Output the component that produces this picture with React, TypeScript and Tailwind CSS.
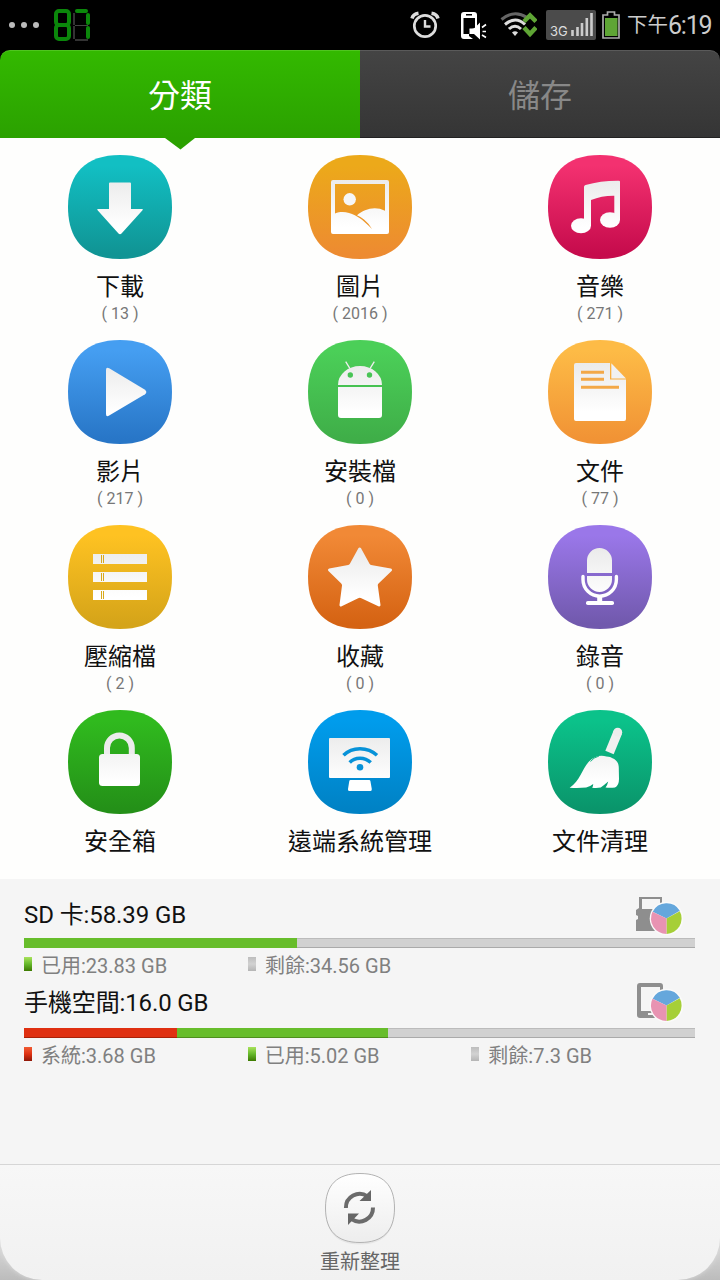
import type { ReactNode } from "react";

const WHITE = "url(#glyph)";

type Category = {
  name: string;
  count?: number;
  from: string;
  to: string;
  glyph: ReactNode;
};

const categories: Category[] = [
  {
    name: "下載",
    count: 13,
    from: "#12bfc3",
    to: "#109494",
    glyph: (
      <path
        d="M42 27.5h20q1 0 1 1V54h11q1.600 0 .5 1.300L53.500 78.500q-1.500 1.500-3 0L29.600 55.300Q28.500 54 30 54h11V28.500q0-1 1-1z"
        fill={WHITE}
      />
    ),
  },
  {
    name: "圖片",
    count: 2016,
    from: "#eca91a",
    to: "#ed8b31",
    glyph: (
      <>
        <path
          fillRule="evenodd"
          d="M25 25h54q2 0 2 2v50q0 2-2 2H25q-2 0-2-2V27q0-2 2-2zM27 29v29.500C39 54 50 61.500 56 66.500q5 4.500 8 7.500-2.500-5-8-9.500-3.500-2.700-7-4.200C56 54 67 50.500 77 55.700V29z"
          fill={WHITE}
        />
        <circle cx="41.700" cy="44.300" r="6.200" fill="#f6f6f6" />
      </>
    ),
  },
  {
    name: "音樂",
    count: 271,
    from: "#f33170",
    to: "#c60b4c",
    glyph: (
      <g fill={WHITE}>
        <path d="M36 32q0-1.500 1.500-2Q53 25.500 71 25.700q1 0 1 1V65h-5.700V40.700Q54 40.500 43 45v26H36z" />
        <ellipse cx="33" cy="70.700" rx="10" ry="7.500" />
        <ellipse cx="62" cy="65" rx="10" ry="7.700" />
      </g>
    ),
  },
  {
    name: "影片",
    count: 217,
    from: "#459ef1",
    to: "#2876c7",
    glyph: (
      <path
        d="M38 30q0-3.500 3.200-1.700L77 49.700q2.600 2.300 0 4.600L41.200 75.600Q38 77.300 38 74z"
        fill={WHITE}
      />
    ),
  },
  {
    name: "安裝檔",
    count: 0,
    from: "#4bcf58",
    to: "#3fae48",
    glyph: (
      <>
        <path d="M37.700 21.700l4.300 7M66.300 21.700l-4.300 7" stroke="#eee" strokeWidth="1.300" />
        <path d="M30 45q0-8 6.500-13.500T52 26t15.500 5.500T74 45zM30 47h44v28q0 3-3 3H33q-3 0-3-3z" fill={WHITE} />
        <circle cx="42.300" cy="35" r="2.700" fill="#48c455" />
        <circle cx="61.500" cy="35" r="2.700" fill="#48c455" />
      </>
    ),
  },
  {
    name: "文件",
    count: 77,
    from: "#fdbb46",
    to: "#f19335",
    glyph: (
      <>
        <path d="M28 23h34v16.500h16V79q0 2-2 2H28q-2 0-2-2V25q0-2 2-2z" fill={WHITE} />
        <path d="M63.300 23.300L78 38.500H63.300z" fill="#f1f1f1" />
        <path d="M33 32.300h23M33 39.300h23M33 47.300h38" stroke="#f3a847" strokeWidth="3" />
      </>
    ),
  },
  {
    name: "壓縮檔",
    count: 2,
    from: "#fec222",
    to: "#d5a419",
    glyph: (
      <>
        <path d="M25 29h54v10H25zM25 47h54v10H25zM25 65h54v10H25z" fill={WHITE} />
        <path
          d="M33.500 30v8M35.500 30v8M33.500 48v8M35.500 48v8M33.500 66v8M35.500 66v8"
          stroke="#d9a91c"
          strokeWidth="1"
        />
      </>
    ),
  },
  {
    name: "收藏",
    count: 0,
    from: "#f18936",
    to: "#d56313",
    glyph: (
      <path
        d="M51.700 24l8.500 15.500q.8 1.600 2.600 1.900L82.500 45 69.500 57.500q-1.500 1.500-1.200 3.300L71 80 54 71.800q-2.200-1-4.500 0L33 80l2.500-19.200q.2-1.800-1.200-3.300L21.500 45l19-3.600q1.900-.3 2.700-1.900z"
        fill={WHITE}
        stroke={WHITE}
        strokeWidth="3"
        strokeLinejoin="round"
      />
    ),
  },
  {
    name: "錄音",
    count: 0,
    from: "#9a77e9",
    to: "#7159ad",
    glyph: (
      <>
        <path
          d="M39 48V35.500a12.500 12.500 0 0 1 25 0V48zM39 51h25v3.500a12.500 12.500 0 0 1-25 0z"
          fill={WHITE}
        />
        <path d="M35 51.500v3a16.700 16.700 0 0 0 33.400 0v-3" fill="none" stroke="#fff" strokeWidth="3.400" strokeLinecap="round" />
        <path d="M51.700 71v6" stroke="#fff" strokeWidth="5" />
        <rect x="38" y="76" width="28" height="4" rx="1.800" fill="#fff" />
      </>
    ),
  },
  {
    name: "安全箱",
    from: "#30ba1e",
    to: "#249018",
    glyph: (
      <>
        <path d="M39 46V38a12.400 12.400 0 0 1 24.800 0v8" fill="none" stroke="#ececec" strokeWidth="6" />
        <rect x="31" y="44" width="41" height="32" rx="3.500" fill={WHITE} />
      </>
    ),
  },
  {
    name: "遠端系統管理",
    from: "#009cec",
    to: "#0082c5",
    glyph: (
      <>
        <path d="M22 28h59q1 0 1 1v38q0 1-1 1H22q-1 0-1-1V29q0-1 1-1z" fill={WHITE} />
        <path d="M42.500 70h18.700q1 0 1.200 1l1.400 8q.2 2-1.300 2H41.300q-1.700 0-1.300-2l1.300-8q.2-1 1.200-1z" fill="#fff" />
        <path d="M35.500 45.300Q42 38.700 52 38.700t17 6.600M41.700 52.500q4-4.300 10.300-4.300t10.700 4.300" fill="none" stroke="#0792d8" strokeWidth="3.500" />
        <circle cx="52" cy="57.200" r="3.300" fill="#0792d8" />
      </>
    ),
  },
  {
    name: "文件清理",
    from: "#0bc28a",
    to: "#0a956b",
    glyph: (
      <>
        <path d="M69.700 22.500L61.500 42.500" stroke="#f0f0f0" strokeWidth="9" />
        <circle cx="69.700" cy="22.300" r="4.500" fill="#ededed" />
        <path
          d="M21.700 77.700C32 71 34 59 41 51.500 46 46 53 44.500 58.500 46.500c3 .5 4.500.5 5.500 1.500 5 2 7 5.500 6.800 11l.2 10q0 6.500-4 8.500-5 .5-9.500 0 2-2.500 2.700-6-4 3.500-7.500 6-4 .8-8.500.2 1-1.700 1-3.700-3 2.500-7 3.500-8 .7-16.500.2z"
          fill={WHITE}
        />
        <path d="M42.500 51.500q3-4 8.500-5.500" stroke="#0bb07e" strokeWidth=".9" fill="none" />
      </>
    ),
  },
];

const squircle = "M52 0C86 0 104 18 104 52S86 104 52 104 0 86 0 52 18 0 52 0z";

function CategoryItem({ item, index }: { item: Category; index: number }) {
  const id = `bg-${index}`;
  return (
    <a href="#" className="flex flex-col items-center">
      <svg width="104" height="104" viewBox="0 0 104 104">
        <defs>
          <linearGradient id={id} x1="0" y1="0" x2="0" y2="1">
            <stop offset=".1" stopColor={item.from} />
            <stop offset=".95" stopColor={item.to} />
          </linearGradient>
          <linearGradient id="glyph" gradientUnits="userSpaceOnUse" x1="0" y1="24" x2="0" y2="72">
            <stop offset="0" stopColor="#ebebeb" />
            <stop offset="1" stopColor="#fff" />
          </linearGradient>
        </defs>
        <path d={squircle} fill={`url(#${id})`} />
        {item.glyph}
      </svg>
      <span className="mt-3 text-2xl leading-8 text-[#111]">{item.name}</span>
      {item.count !== undefined && (
        <span className="mt-px text-base leading-5 text-[#777]">( {item.count} )</span>
      )}
    </a>
  );
}

function StatusBar() {
  return (
    <div className="flex h-[50px] items-center bg-black">
      {/* Notifications */}
      <div className="ml-[9px] flex gap-[6px]">
        <i className="size-[6px] rounded-full bg-[#bbb]" />
        <i className="size-[6px] rounded-full bg-[#bbb]" />
        <i className="size-[6px] rounded-full bg-[#bbb]" />
      </div>
      <div className="ml-[15px] flex gap-[2px]">
        <div className="flex h-8 w-[17px] flex-col">
          <i className="h-[18px] rounded-[5px] border-4 border-[#0b870b]" />
          <i className="-mt-[4px] h-[18px] rounded-[5px] border-4 border-[#0b870b]" />
        </div>
        {/* Dim segments stay faintly visible on the second digit */}
        <div className="flex h-8 w-[17px] flex-col">
          <i className="mx-[2px] h-[4px] rounded-sm bg-[#0b870b]" />
          <div className="flex h-3 justify-between">
            <i className="w-[2px] bg-[#333]" />
            <i className="w-[4px] rounded-sm bg-[#0b870b]" />
          </div>
          <i className="mx-[2px] h-px bg-[#444]" />
          <div className="flex h-[13px] justify-between">
            <i className="w-[2px] bg-[#333]" />
            <i className="w-[4px] rounded-sm bg-[#0b870b]" />
          </div>
          <i className="mx-[2px] h-[2px] bg-[#333]" />
        </div>
      </div>

      {/* Alarm */}
      <svg className="ml-[320px]" width="30" height="28" viewBox="0 0 30 28" fill="none" stroke="#ddd">
        <circle cx="15" cy="15" r="10.700" strokeWidth="2.700" />
        <path d="M15 9v6.500h5.500" strokeWidth="2.400" />
        <path d="M2 7.500Q3 3 8.500 2.200M21.500 2.200Q27 3 28 7.500" strokeWidth="3.500" />
      </svg>
      {/* Phone speaker */}
      <svg className="mt-[2px] ml-5" width="27" height="28" viewBox="0 0 27 28">
        <path fillRule="evenodd" fill="#fff" d="M4 0h10q3 0 3 3v12l-3.500 3H9v6l4 3H4q-3 0-3-3V3q0-3 3-3zM3.500 6v16H9v-4l6-2V6zM6 2v1.500h6V2z" />
        <path d="M9.500 16.500H14l6-6v17l-6-5.500H9.500z" fill="#fff" />
        <path d="M22 15.500l4-3M22.500 19.500H26M22 23l4 2.500" stroke="#fff" strokeWidth="1.600" />
      </svg>
      {/* Wi-Fi */}
      <svg className="ml-[13px]" width="37" height="26" viewBox="0 0 37 26" fill="none">
        <path d="M1.500 7.500Q14-3 27 5.500" stroke="#666" strokeWidth="3" />
        <path d="M5 12.500q10.500-9 20 0M9 17q6-5.500 12 0" stroke="#ddd" strokeWidth="3" />
        <path d="M12 20.500q3-2.500 6 0L15 24z" fill="#ddd" />
        <path d="M24 9.500L30 3.500L36 9.500M24 15.500L30 22L36 15.500" stroke="#5fa535" strokeWidth="4.500" />
      </svg>
      {/* Mobile signal */}
      <div className="ml-[9px] flex h-[30px] w-[50px] items-end rounded-[2px] bg-[#4b4b4b] pb-[4px] pl-[4px]">
        <span className="w-[20px] font-['Inter'] text-[13px] leading-[9px] text-[#ddd]">3G</span>
        <svg className="ml-px" width="22" height="23" viewBox="0 0 22 23">
          <path d="M1.500 23v-6M6.500 23v-9M11 23V10M15.800 23V5M20.500 23V0" stroke="#ccc" strokeWidth="2.600" />
        </svg>
      </div>
      {/* Battery */}
      <svg className="ml-[6px]" width="18" height="28" viewBox="0 0 18 28">
        <path d="M5.500 4V1h7v3h4.500v23H1V4z" fill="none" stroke="#aaa" strokeWidth="1.700" />
        <path d="M3 7h12.500v18H3z" fill="#5fa535" />
      </svg>
      <span className="mt-px ml-[7px] flex items-center text-[#ccc]">
        <span className="text-[20.5px]">下午</span>
        <span className="text-[25px] tracking-[-1.2px]">6:19</span>
      </span>
    </div>
  );
}

function Pie() {
  return (
    <g transform="translate(0 -1.5)">
      <circle cx="30.500" cy="24" r="16.800" fill="#fafafa" />
      <path d="M30.500 24L16.700 17.300A15.500 15.500 0 0 1 43.800 16.300z" fill="#65a7dc" />
      <path d="M30.500 24L43.800 16.800A15.500 15.500 0 0 1 30.500 39.500z" fill="#a6cf38" />
      <path d="M30.500 24V39.500A15.500 15.500 0 0 1 16.500 17.300z" fill="#e893b2" />
    </g>
  );
}

const swatches = {
  green: "bg-linear-to-b from-[#a8e25b] via-[#66b92a] to-[#3d7a00]",
  red: "bg-linear-to-b from-[#f05a32] via-[#df3011] to-[#8f1808]",
  gray: "bg-linear-to-b from-[#bdbdbd] via-[#d2d2d2] to-[#b5b5b5]",
};

function Legend({ items }: { items: { color: keyof typeof swatches; text: string }[] }) {
  return (
    <div className="flex h-[34px] items-center">
      {items.map((it) => (
        <div key={it.text} className="flex w-56 items-center gap-[9px]">
          <i className={`-mt-[2px] h-[14px] w-2 ${swatches[it.color]}`} />
          <span className="mt-px text-xl text-[#808080]">{it.text}</span>
        </div>
      ))}
    </div>
  );
}

export default function App() {
  return (
    <div className="flex h-[1280px] w-[720px] flex-col overflow-hidden bg-black font-['Roboto','Noto_Sans_CJK_TC',sans-serif]">
      <StatusBar />

      {/* Tabs */}
      <div className="flex h-[88px] text-[32px]">
        <div className="relative flex w-1/2 items-center justify-center rounded-tl-[10px] border-t border-[#4fc51f] bg-linear-to-b from-[#33b900] to-[#2ba100] pt-[2px] text-white">
          分類
          <svg className="absolute top-[87px] left-[165px]" width="30" height="12" viewBox="0 0 30 12">
            <path d="M0 0h30L15.500 11.500z" fill="#2ba100" />
          </svg>
        </div>
        <div className="flex w-1/2 items-center justify-center rounded-tr-[10px] border-t border-b border-t-[#5a5a5a] border-b-[#222] bg-linear-to-b from-[#444] to-[#353535] pt-[3px] text-[#888]">
          儲存
        </div>
      </div>

      {/* Categories */}
      <div className="grid h-[741px] grid-cols-3 grid-rows-[185px_185px_185px_169px] bg-[#fefefd] pt-[17px]">
        {categories.map((item, i) => (
          <CategoryItem key={item.name} item={item} index={i} />
        ))}
      </div>

      {/* Storage */}
      <div className="h-[285px] bg-[#f5f5f5] pr-[25px] pl-6">
        <div className="flex h-[59px] items-center justify-between pt-[13px] pr-[12px]">
          <span className="text-2xl tracking-[-0.1px] text-[#111]">SD 卡:58.39 GB</span>
          <svg className="mt-px" width="47" height="40" viewBox="0 0 47 40">
            <path fillRule="evenodd" fill="#8e8e8e" d="M3 1h23v10h-2V3H6v10h16v22H0V24l2-1v-3l-2-1v-5l3-2z" />
            <Pie />
          </svg>
        </div>
        <div className="flex h-[10px] border-y border-t-[#bbb] border-b-[#aaa] bg-[#d1d1d1]">
          <div className="-my-px w-[273px] bg-[#67bd2b]" />
        </div>
        <Legend
          items={[
            { color: "green", text: "已用:23.83 GB" },
            { color: "gray", text: "剩餘:34.56 GB" },
          ]}
        />
        <div className="flex h-[46px] items-center justify-between pr-[12px] pb-1">
          <span className="text-2xl tracking-[-0.12px] text-[#111]">手機空間:16.0 GB</span>
          <svg className="-mt-px" width="47" height="40" viewBox="0 0 47 40">
            <path fillRule="evenodd" fill="#8e8e8e" d="M4 0h20q3 0 3 3v4h-3V4H5v24h18v7H4q-3 0-3-3V3q0-3 3-3zM12 30v2h6v-2z" />
            <Pie />
          </svg>
        </div>
        <div className="flex h-[10px] border-y border-t-[#bbb] border-b-[#aaa] bg-[#d1d1d1]">
          <div className="-my-px w-[153px] border-b border-[#a82108] bg-[#df3011]" />
          <div className="-my-px w-[211px] border-b border-[#4e8f1d] bg-[#67bd2b]" />
        </div>
        <Legend
          items={[
            { color: "red", text: "系統:3.68 GB" },
            { color: "green", text: "已用:5.02 GB" },
            { color: "gray", text: "剩餘:7.3 GB" },
          ]}
        />
      </div>

      {/* Bottom action */}
      <div className="h-[116px] overflow-hidden bg-linear-to-b from-[#f5f5f5] from-40% to-[#bcbcbc]">
        <div className="flex h-full flex-col items-center rounded-b-[42px] border-t border-[#d6d6d6] bg-linear-to-b from-[#f7f7f7] to-[#f1f1f1] pt-[7px] shadow-[0_0_5px_#ddd]">
          <svg width="74" height="74" viewBox="0 0 74 74">
            <defs>
              <linearGradient id="btn" x1="0" y1="0" x2="0" y2="1">
                <stop offset="0" stopColor="#fff" />
                <stop offset="1" stopColor="#ededed" />
              </linearGradient>
            </defs>
            <path d="M37 3C60 3 71.500 14.500 71.500 37.500S60 72.500 37 72.500 2.500 60.500 2.500 37.500 14 3 37 3z" fill="#e6e6e6" />
            <path d="M37 1.500C60 1.500 71.500 13 71.500 36S60 70.500 37 70.500 2.500 59 2.500 36 14 1.500 37 1.500z" fill="url(#btn)" stroke="#b3b3b3" />
            <g fill="none" stroke="#6b6b6b" strokeWidth="4">
              <path d="M22.900 36A13.800 13.800 0 0 1 44.500 24.300" />
              <path d="M50 35.500A13.800 13.800 0 0 1 28.500 47.200" />
            </g>
            <path d="M48 18v11H36.500zM25 53V41.500h11z" fill="#666" />
          </svg>
          <span className="mt-[2px] text-xl leading-7 text-[#666]">重新整理</span>
        </div>
      </div>
    </div>
  );
}
